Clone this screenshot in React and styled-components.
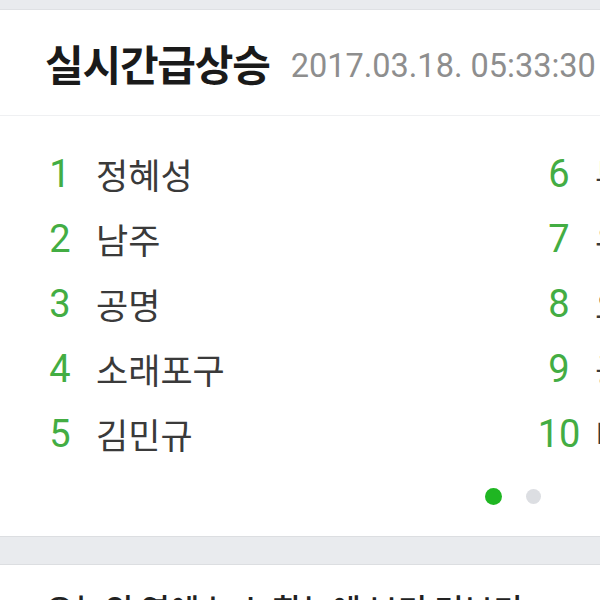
import React from "react";
import styled, { createGlobalStyle } from "styled-components";

const left = [
  { rank: 1, name: "정혜성" },
  { rank: 2, name: "남주" },
  { rank: 3, name: "공명" },
  { rank: 4, name: "소래포구" },
  { rank: 5, name: "김민규" },
];

const right = [
  { rank: 6, name: "부산" },
  { rank: 7, name: "우리" },
  { rank: 8, name: "오늘" },
  { rank: 9, name: "공유" },
  { rank: 10, name: "미세먼지" },
];

const GlobalStyle = createGlobalStyle`
  html, body {
    margin: 0;
    padding: 0;
    height: 600px;
    overflow: hidden;
    background: #e9ebee;
  }
  body {
    font-family: Roboto, "Noto Sans CJK KR", sans-serif;
  }
`;

const Page = styled.div`
  width: 600px;
  padding-top: 9px;
  display: flex;
  flex-direction: column;
  gap: 27px;
`;

const Card = styled.section`
  background: #fff;
  border-top: 1px solid #dfe1e4;
  border-bottom: 1px solid #dcdee1;
  overflow: hidden;
`;

const Header = styled.header`
  height: 105px;
  display: flex;
  align-items: center;
  gap: 21px;
  padding-left: 45px;
  border-bottom: 1px solid #eff0f2;
  white-space: nowrap;
`;

const Title = styled.h2`
  margin: 0;
  font-family: "Noto Sans CJK KR", sans-serif;
  font-size: 42px;
  font-weight: 700;
  letter-spacing: -1.2px;
  color: #1a1a1a;
`;

const Stamp = styled.span`
  font-family: Roboto, sans-serif;
  font-size: 32.5px;
  color: #8e8e8e;
  padding-top: 6px;
`;

const Slides = styled.div`
  display: grid;
  grid-template-columns: 499px 499px;
  padding: 25px 0 0 38px;
`;

const Column = styled.ol`
  list-style: none;
  margin: 0;
  padding: 0;
`;

const Row = styled.li`
  height: 65px;
  display: flex;
  align-items: center;
  gap: 14px;
  white-space: nowrap;
`;

const Rank = styled.span`
  width: 44px;
  text-align: center;
  font-family: Roboto, sans-serif;
  font-size: 38px;
  color: #43ad43;
`;

const Name = styled.span`
  font-family: "Noto Sans CJK KR", sans-serif;
  font-size: 35px;
  color: #3a3a3a;
`;

const Dots = styled.div`
  height: 61px;
  display: flex;
  justify-content: flex-end;
  align-items: center;
  gap: 24px;
  padding: 0 59px 9px 0;
`;

const Dot = styled.span`
  width: ${(p) => (p.$active ? 17 : 15)}px;
  height: ${(p) => (p.$active ? 17 : 15)}px;
  border-radius: 50%;
  background: ${(p) => (p.$active ? "#1fb622" : "#dcdee2")};
`;

const NextCard = styled.section`
  background: #fff;
  border-top: 1px solid #dcdee1;
  height: 60px;
  padding: 20px 0 0 45px;
  box-sizing: border-box;
`;

const NextTitle = styled.h3`
  margin: 0;
  font-family: "Noto Sans CJK KR", sans-serif;
  font-size: 32px;
  font-weight: 500;
  color: #222;
  white-space: nowrap;
`;

export default function App() {
  return (
    <>
      <GlobalStyle />
      <Page>
        <Card>
          <Header>
            <Title>실시간급상승</Title>
            <Stamp>2017.03.18. 05:33:30</Stamp>
          </Header>
          <Slides>
            {[left, right].map((col, i) => (
              <Column key={i}>
                {col.map((item) => (
                  <Row key={item.rank}>
                    <Rank>{item.rank}</Rank>
                    <Name>{item.name}</Name>
                  </Row>
                ))}
              </Column>
            ))}
          </Slides>
          <Dots>
            <Dot $active />
            <Dot />
          </Dots>
        </Card>
        <NextCard>
          <NextTitle>오늘의 연예 뉴스 한눈에 보기 더보기</NextTitle>
        </NextCard>
      </Page>
    </>
  );
}
